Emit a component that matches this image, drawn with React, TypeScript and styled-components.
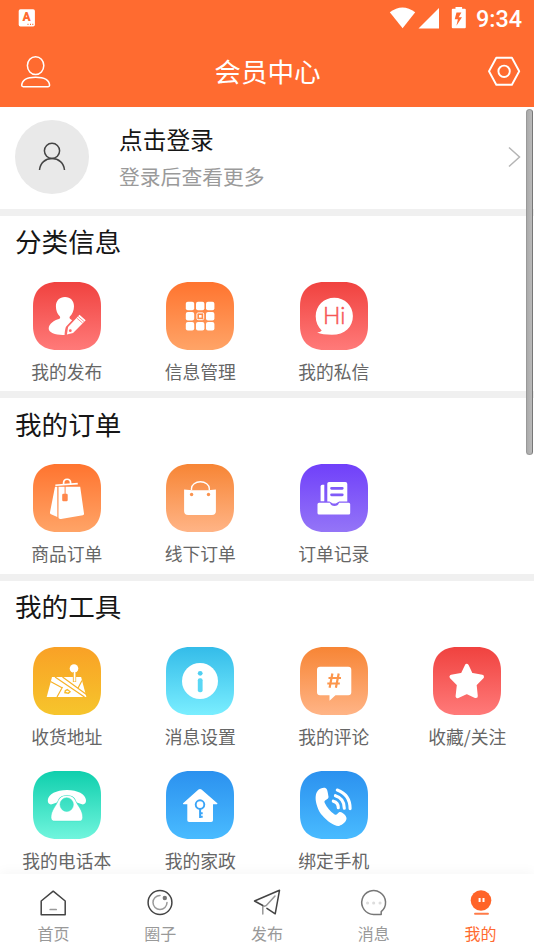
import React from 'react';
import styled, { createGlobalStyle } from 'styled-components';

const Global = createGlobalStyle`
  *, *::before, *::after { box-sizing: border-box; }
  body { margin: 0; background: #fff; }
  svg { display: block; }
`;

const Screen = styled.div`
  position: relative;
  display: flex;
  flex-direction: column;
  width: 534px;
  height: 950px;
  overflow: hidden;
  background: #fff;
  color: #161616;
  font-family: "Noto Sans CJK SC", "Noto Sans", sans-serif;
`;

const Header = styled.header`
  flex: none;
  height: 107px;
  background: #ff6b30;
  color: #fff;
`;

const StatusBar = styled.div`
  display: flex;
  align-items: center;
  height: 36px;
  padding: 0 12px 0 18px;
`;

const StatusIcons = styled.div`
  display: flex;
  align-items: center;
  margin-left: auto;
`;

const Clock = styled.span`
  margin-left: 10px;
  padding-top: 1px;
  font: 500 23.4px/34px Roboto, sans-serif;
`;

const TitleBar = styled.div`
  display: flex;
  align-items: center;
  justify-content: space-between;
  height: 71px;
  padding: 0 13px 0 20px;
`;

const PageTitle = styled.h1`
  margin: 0 0 2px -4px;
  font-size: 26.6px;
  font-weight: 400;
  line-height: 40px;
`;

const Content = styled.main`
  flex: 1;
  min-height: 0;
  overflow: hidden;
`;

const Profile = styled.section`
  display: flex;
  align-items: center;
  height: 108.7px;
  padding: 0 13px 1px 15px;
  border-bottom: 7.5px solid #f0f0f0;
`;

const Avatar = styled.div`
  display: grid;
  place-items: center;
  width: 74px;
  height: 74px;
  border-radius: 50%;
  background: #e9e9e9;
`;

const ProfileText = styled.div`
  flex: 1;
  margin-left: 30px;
  padding-top: 2px;
`;

const LoginLabel = styled.div`
  font-size: 23.7px;
  line-height: 36px;
`;

const LoginHint = styled.div`
  color: #9a9a9a;
  font-size: 20.8px;
  line-height: 38px;
`;

const Section = styled.section`
  height: 182.5px;
  border-bottom: 7.5px solid #f0f0f0;
  &:last-child { height: 320px; border-bottom: 0; }
`;

const SectionTitle = styled.h2`
  margin: 0;
  padding: 5.35px 15px 0;
  height: 66px;
  font-size: 26.6px;
  font-weight: 400;
  line-height: 40px;
`;

const Grid = styled.div`
  display: grid;
  grid-template-columns: repeat(4, 133.5px);
  grid-auto-rows: 124px;
`;

const Entry = styled.div`
  display: flex;
  flex-direction: column;
  align-items: center;
  color: #666;
  font-size: 17.8px;
  line-height: 26px;
  white-space: nowrap;
`;

const EntryLabel = styled.span`
  margin-top: 8.3px;
`;

const ScrollThumb = styled.div`
  position: absolute;
  top: 109px;
  right: 1px;
  width: 7px;
  height: 346px;
  border: 1px solid #999;
  border-right-color: #777;
  border-radius: 4px;
  background: linear-gradient(90deg, #aaa, #bbb);
`;

const TabBar = styled.nav`
  position: relative;
  display: grid;
  grid-template-columns: repeat(5, 1fr);
  flex: none;
  height: 76px;
  background: #fff;
  box-shadow: 0 -2px 12px rgba(0, 0, 0, 0.04);
`;

const Tab = styled.div<{ $active?: boolean }>`
  display: flex;
  flex-direction: column;
  align-items: center;
  padding-top: 13px;
  color: ${(p) => (p.$active ? '#ff6b30' : '#999')};
  font-size: 16px;
  line-height: 24px;
`;

const TabLabel = styled.span`
  margin-top: 2px;
`;

type TileProps = { id: string; from: string; to: string; children: React.ReactNode };

const Tile = ({ id, from, to, children }: TileProps) => (
  <svg width="68" height="68" viewBox="0 0 68 68" fill="#fff">
    <defs>
      <linearGradient id={id} x1="0" y1="0" x2="0" y2="1">
        <stop offset="0" stopColor={from} />
        <stop offset="1" stopColor={to} />
      </linearGradient>
    </defs>
    <path
      fill={`url(#${id})`}
      d="M24 0H44C59 0 68 9 68 24V44C68 59 59 68 44 68H24C9 68 0 59 0 44V24C0 9 9 0 24 0Z"
    />
    {children}
  </svg>
);

const RED = ['#f0423f', '#ff7a79'];
const ORANGE = ['#ff742f', '#ffa467'];
const PEACH = ['#f78535', '#ffb486'];

const PublishIcon = () => (
  <Tile id="publish" from={RED[0]} to={RED[1]}>
    <path d="M32 15c5.500 0 9 3.800 9 9.200 0 4.200-1.600 8-4.100 10.300-.6.600-.4 1.900.4 2.500l1.800 1.200-5.900 6.200c-.8.900-1.500 5.600-1.600 8.500-8.500.4-15.900-1.900-15.900-6.300 0-4.500 5.600-8.300 10.300-9.500 1.400-.4 1.500-2 .5-3-2.100-2.300-3.600-5.700-3.600-9.900C22.900 18.800 26.500 15 32 15Z" />
    <path d="m46.500 32.800 6.200 5.500-12.600 12.600-6.200 1.600 1.200-7.500Z" strokeLinejoin="round" />
    <path d="m43.700 36 6 5.200m-4.600-6.800 6 5.200" stroke="#fb6160" strokeWidth=".7" />
    <circle cx="37.300" cy="48.700" r="1.400" fill="#fc6a69" />
  </Tile>
);

const ManageIcon = () => (
  <Tile id="manage" from={ORANGE[0]} to={ORANGE[1]}>
    {[19.8, 30, 40].map((y) =>
      [19.800, 30, 40].map((x) =>
        x === 30 && y === 30 ? null : <rect key={`${x}-${y}`} x={x} y={y} width="8.400" height="8.500" rx="2" />,
      ),
    )}
    <rect x="30.900" y="30.900" width="6.800" height="6.800" rx="1.200" fill="none" stroke="#fff" strokeWidth="1" />
    <rect x="33" y="33" width="2.600" height="2.600" />
  </Tile>
);

const MessageIcon = () => (
  <Tile id="message" from={RED[0]} to={RED[1]}>
    <path d="M34.300 15.700c10.400 0 18.600 8.100 18.600 18.200 0 11-8 18.900-21 18.900-6 0-11.500-.7-14.800-2.200 2.100-.2 3.700-.9 4.600-2.100-3.700-3.600-6-8.300-6-14.200 0-10.500 8.200-18.600 18.600-18.600Z" />
    <text x="23" y="42.200" fill="#f75756" stroke="#f75756" strokeWidth=".5" fontFamily="Lato" fontWeight="300" fontSize="23">Hi</text>
  </Tile>
);

const GoodsIcon = () => (
  <Tile id="goods" from={ORANGE[0]} to={ORANGE[1]}>
    <path d="M30.600 20.500v-1.500c0-5 7-5 7 0v1.500" fill="none" stroke="#fff" strokeWidth="1.700" />
    <path d="m22.300 20.400 22.300-1.700.3 1.700-22.500 1.700ZM25.500 22.800h21.700L51 49.600c.1.900-.3 1.400-1.200 1.600L28 54.900c-1.600.2-2.500-.3-2.500-1.900Zm-3.500 0h2.300v30.300L18 50.200c-.9-.5-1.100-1-1-1.900Z" />
    <path d="M32.100 22v8" stroke="#ff874b" strokeWidth="1" />
    <rect x="29.200" y="29.700" width="5.500" height="7.600" rx="1.200" fill="#ff874b" />
  </Tile>
);

const OfflineIcon = () => (
  <Tile id="offline" from={PEACH[0]} to={PEACH[1]}>
    <path d="M25.500 26v-1.500a8.900 6.700 0 0 1 17.800 0V26" fill="none" stroke="#fff" strokeWidth="1.400" />
    <path d="M18.100 25.500q16 1.700 31.800 0v21.700q0 3.700-4 3.700H22.100q-4 0-4-3.700Z" />
    <circle cx="25.600" cy="30.500" r="1.700" fill="#fa934f" />
    <circle cx="42.500" cy="30.500" r="1.700" fill="#fa934f" />
  </Tile>
);

const RecordIcon = () => (
  <Tile id="record" from="#7040fa" to="#9475f7">
    <path d="M29 18h16.300q2 0 2 2v17.500h-8.100l-3.400 2h-3l-3.400-2h-2.100V19.500Q27.300 18 29 18Z" />
    <path d="M22.200 20.700h2.100v16.500h-3.700V22.500Q20.600 20.700 22.200 20.700Z" />
    <path d="M31.500 24.300h10.800M31.500 30.800h10.800" stroke="#805bf8" strokeWidth="2.700" strokeLinecap="round" />
    <path d="M19 38.700h11q1 3.300 4.500 3.300t4.500-3.300h9.700q1.500 0 1.500 1.500v8.700q0 1.500-1.500 1.500H19q-1.500 0-1.500-1.500v-8.700q0-1.500 1.500-1.500Z" />
  </Tile>
);

const AddressIcon = () => (
  <Tile id="address" from="#f9a126" to="#f6c52c">
    <path d="M19 30h29.100l5.300 20H13.700Z" />
    <path d="M17.500 34.500 29 40.700M22 30l29.500 20M29.500 30l24 17.500M45.200 40.800 49 33.500M29.500 40 24 50" stroke="#f7b228" strokeWidth="1.200" />
    <path d="m31.700 43.200 2.700-1.400 3.700 3-2.500 2.200-4.500-.8Z" fill="#f7bb28" />
    <path d="m34 43.400 2.300 1-1.400 1.100-2.400-.7Z" />
    <circle cx="41" cy="21.500" r="4.300" />
    <path d="M41.500 25v10" stroke="#f7b228" strokeWidth="3.300" />
    <path d="M41.600 25v9.500" stroke="#fff" strokeWidth="1.700" />
  </Tile>
);

const NoticeIcon = () => (
  <Tile id="notice" from="#34bce9" to="#7aeeff">
    <circle cx="34" cy="34" r="18" />
    <circle cx="34.200" cy="26.300" r="2.400" fill="#4fcff1" />
    <rect x="31.800" y="31.200" width="4.800" height="14" rx="2" fill="#59d7f5" />
  </Tile>
);

const CommentIcon = () => (
  <Tile id="comment" from={PEACH[0]} to={PEACH[1]}>
    <path d="M20 19.700h28.300q3 0 3 3v22.600q0 3-3 3H35.500l-6 5.400v-5.400H20q-3 0-3-3V22.700q0-3 3-3Z" />
    <path d="m32.400 26.500-2.800 14.300M38.700 26.500l-2.800 14.300M28.500 31h12.500M27.300 36.500h12.500" stroke="#fc964c" strokeWidth="2.200" />
  </Tile>
);

const FavoriteIcon = () => (
  <Tile id="favorite" from={RED[0]} to={RED[1]}>
    <path
      stroke="#fff"
      strokeWidth="4"
      strokeLinejoin="round"
      d="m33.800 18.800 4.200 9 11 2-7.400 7.600 1.200 11.700-9-4.200-9.200 4.200 1.300-11.700-7.400-7.600 11-2Z"
    />
  </Tile>
);

const PhonebookIcon = () => (
  <Tile id="phonebook" from="#0fcfad" to="#70f5dd">
    <path d="M34 19c10.700 0 18.400 4.200 19 10 .2 3.600-2 5.100-4.800 4.100l-4.300-1.700c-1.500-.7-1.200-2.300-2-3.800-1.300-2.200-4-3.200-7.900-3.200s-6.800 1-8.100 3.200c-.9 1.500-.5 3.100-2 3.800l-4.300 1.700c-2.800 1-5-.5-4.800-4.100.6-5.800 8.500-10 19.200-10Z" />
    <path
      stroke="#3de1c4"
      strokeWidth=".5"
      fillRule="evenodd"
      d="M34 24.400c4.700 0 7.200 2 8.500 5.200 1 2.300 2.600 4.900 4.300 7.400 2 3.300 2.900 6.500 2.900 9.200 0 2.900-1 3.900-3.800 3.900H22c-2.800 0-4-1-4-3.900 0-2.700 1-5.900 3-9.200 1.700-2.500 3.300-5.100 4.200-7.400 1.400-3.200 4.100-5.200 8.800-5.200Zm-.3 2.300a6.700 6.900 0 1 0 0 13.800 6.700 6.900 0 0 0 0-13.800Z"
    />
  </Tile>
);

const HousekeepingIcon = () => (
  <Tile id="housekeeping" from="#2b91ef" to="#49bbff">
    <path d="M32.500 18.500q1.500-1.200 3 0l15.800 13.800q.5.800-.5 1H47v16q0 1.800-1.800 1.800H23.100q-1.800 0-1.800-1.800v-16h-3.600q-1.200-.2-.6-1.100Z" />
    <circle cx="34" cy="33.600" r="4.300" fill="none" stroke="#3aa4f7" strokeWidth="1.900" />
    <path d="M34.100 38v9M34 42.300h2.700M34 45.700h2.700" fill="none" stroke="#3aa5f8" strokeWidth="2" />
  </Tile>
);

const MobileIcon = () => (
  <Tile id="mobile" from="#2b91ef" to="#49bbff">
    <path d="M18 19.500c2-2.200 5.700-3.300 7.800-2.300 1.800.9 2.200 5.400 2.700 8.400.3 1.900-1.200 2.900-3.400 3.800-.8.300-.8 1.500-.3 2.700 2 4.500 5.500 8.500 9.500 11.200 1.500 1 2.300.5 3.200-.5 1.300-1.700 2.700-2.400 4.400-1.200 2.500 1.600 4.300 3.300 4.600 5.500.3 3.300-3.800 7-7.400 7.800-4 .9-11.600-4-17.200-10.800C17.500 38.900 12.600 25.500 18 19.500Z" />
    <g fill="none" stroke="#fff" strokeWidth="3.100" strokeLinecap="round">
      <path d="M33.300 30.200q5 1.300 5 6.500M35.400 24.700q8.900 2.700 8.900 12.500M37.300 19q12.800 4.700 12.800 18.600" />
    </g>
  </Tile>
);

const groups = [
  { title: '分类信息', items: [['我的发布', PublishIcon], ['信息管理', ManageIcon], ['我的私信', MessageIcon]] },
  { title: '我的订单', items: [['商品订单', GoodsIcon], ['线下订单', OfflineIcon], ['订单记录', RecordIcon]] },
  {
    title: '我的工具',
    items: [
      ['收货地址', AddressIcon],
      ['消息设置', NoticeIcon],
      ['我的评论', CommentIcon],
      ['收藏/关注', FavoriteIcon],
      ['我的电话本', PhonebookIcon],
      ['我的家政', HousekeepingIcon],
      ['绑定手机', MobileIcon],
    ],
  },
] as { title: string; items: [string, React.FC][] }[];

const TabIcon = ({ children }: { children: React.ReactNode }) => (
  <svg width="32" height="32" viewBox="0 0 32 32" fill="none" stroke="#444" strokeWidth="1.500" strokeLinejoin="round" strokeLinecap="round">
    {children}
  </svg>
);

const tabs = [
  {
    label: '首页',
    icon: (
      <>
        <path d="M4.200 14 16.200 4.200 28.200 14v13.800h-24Z" />
        <path d="M13.200 22.500h6" stroke="#999" strokeWidth="1.700" />
      </>
    ),
  },
  {
    label: '圈子',
    icon: (
      <>
        <circle cx="16" cy="15.500" r="11.900" />
        <path d="M16 8.500a7 7 0 1 0 7 7" stroke="#999" />
        <circle cx="20.800" cy="11" r="2.200" fill="#777" stroke="none" />
      </>
    ),
  },
  {
    label: '发布',
    icon: (
      <>
        <path d="m24 9-8.700 9.500-3.500 1.200v7.300" stroke="#999" />
        <path d="M11.800 18.500 3.500 14 28.500 3.300l-4.300 23.500-8.300-5.500" />
      </>
    ),
  },
  {
    label: '消息',
    icon: (
      <>
        <path d="M23.200 24.700v2.700h-7.500A11.900 11.900 0 1 1 23.200 24.700Z" stroke="#777" />
        <path d="M9.500 16h.1M15.600 16h.1M22 16h.1" stroke="#ddd" strokeWidth="3" />
      </>
    ),
  },
  {
    label: '我的',
    active: true,
    icon: (
      <>
        <circle cx="16" cy="13.500" r="10.300" fill="#ff6429" stroke="none" />
        <path d="M14.600 11v4M18.500 11v4" stroke="#fff" strokeWidth="2" strokeLinecap="butt" />
        <path d="M10 26.800h13" stroke="#ff7b48" strokeWidth="1.900" />
      </>
    ),
  },
];

export default function App() {
  return (
    <Screen>
      <Global />
      <Header>
        <StatusBar>
          <svg width="18" height="18" viewBox="0 0 18 18">
            <rect x=".7" y=".3" width="16.200" height="17.300" rx="1.800" fill="#fff" />
            <text x="8.700" y="12.300" textAnchor="middle" fill="#ff6b30" fontFamily="Roboto" fontWeight="900" fontSize="12">A</text>
            <path d="M9.500 15.300h1M12 15.300h1M14.300 15.300h1" stroke="#ff6b30" strokeWidth="1.200" />
          </svg>
          <StatusIcons>
            <svg width="78" height="24" viewBox="0 0 78 24" fill="#fff">
              <path d="M1.800 6.300q12.700-9.400 25.400 0L14.600 22.200Z" />
              <path d="M30.500 22.600 51 2v20.600Z" />
              <path d="M67.500 1v1.800h-2.700q-1 0-1 1v17.400q0 1 1 1h12q1 0 1-1V3.800q0-1-1-1h-2.700V1Z" />
              <path d="m68.500 6.500-1.800 6.800h3.200l-1.500 6.400 5.600-8.500h-3.300l2.700-4.700Z" fill="#ff6b30" />
            </svg>
            <Clock>9:34</Clock>
          </StatusIcons>
        </StatusBar>
        <TitleBar>
          <svg width="32" height="34" viewBox="0 0 32 34" fill="none" stroke="#fff" strokeWidth="1.500">
            <ellipse cx="15.600" cy="10.600" rx="8.200" ry="8.900" />
            <path d="M1.700 30.300C2 25 7.500 22.200 15.600 22.200S29.300 25 29.600 30.300q0 1.400-1.500 1.400H3.200q-1.500 0-1.500-1.400Z" />
          </svg>
          <PageTitle>会员中心</PageTitle>
          <svg width="34" height="32" viewBox="0 0 34 32" fill="none" stroke="#fff" strokeWidth="1.900" strokeLinejoin="round">
            <path d="M9.300 1.800h15.600l7.300 13.500-7.300 13.500H9.300L2 15.300Z" />
            <circle cx="17.100" cy="15.300" r="5.700" />
          </svg>
        </TitleBar>
      </Header>
      <Content>
        <Profile>
          <Avatar>
            <svg width="30" height="32" viewBox="0 0 30 32" fill="none" stroke="#444" strokeWidth="1.500">
              <circle cx="15" cy="9.800" r="7.600" />
              <path d="M2.500 29C3.200 22 8.300 17.500 15 17.500S26.800 22 27.500 29" />
            </svg>
          </Avatar>
          <ProfileText>
            <LoginLabel>点击登录</LoginLabel>
            <LoginHint>登录后查看更多</LoginHint>
          </ProfileText>
          <svg width="13" height="22" viewBox="0 0 13 22" fill="none" stroke="#b5b5b5" strokeWidth="1.500">
            <path d="m1 1.500 10.500 9.500L1 20.500" />
          </svg>
        </Profile>
        {groups.map((group) => (
          <Section key={group.title}>
            <SectionTitle>{group.title}</SectionTitle>
            <Grid>
              {group.items.map(([label, Icon]) => (
                <Entry key={label}>
                  <Icon />
                  <EntryLabel>{label}</EntryLabel>
                </Entry>
              ))}
            </Grid>
          </Section>
        ))}
      </Content>
      <TabBar>
        {tabs.map((tab) => (
          <Tab key={tab.label} $active={tab.active}>
            <TabIcon>{tab.icon}</TabIcon>
            <TabLabel>{tab.label}</TabLabel>
          </Tab>
        ))}
      </TabBar>
      <ScrollThumb />
    </Screen>
  );
}
